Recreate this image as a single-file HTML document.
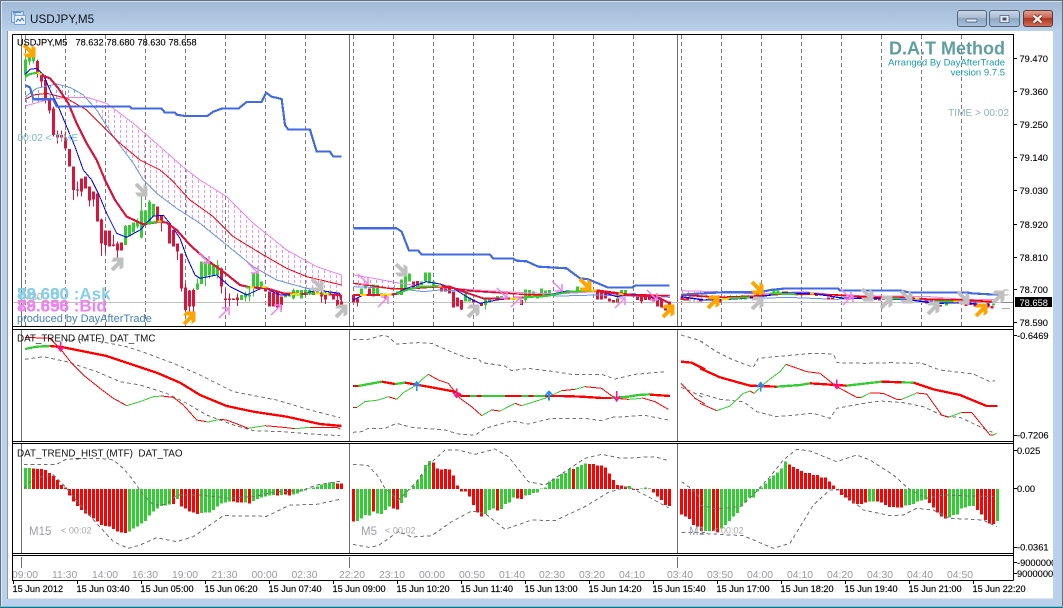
<!DOCTYPE html>
<html><head><meta charset="utf-8"><title>USDJPY,M5</title>
<style>
html,body{margin:0;padding:0;background:#b9d1ea;width:1063px;height:608px;overflow:hidden}
svg{display:block;font-family:"Liberation Sans",Arial,sans-serif}
text{white-space:pre}
.ax{font-size:9.3px;fill:#000;stroke:#000;stroke-width:.12}
.t{font-size:10.4px;fill:#9a9aa2}
.d{font-size:9.2px;fill:#000;stroke:#000;stroke-width:.15}
.n{fill:none;shape-rendering:crispEdges}
.cr{shape-rendering:crispEdges;fill:none}
</style></head><body>
<svg width="1063" height="608" viewBox="0 0 1063 608" xmlns="http://www.w3.org/2000/svg">
<defs>
<linearGradient id="tb" x1="0" y1="0" x2="0" y2="1"><stop offset="0" stop-color="#a0b8d4"/><stop offset="1" stop-color="#b9d1ea"/></linearGradient>
<linearGradient id="bt" x1="0" y1="0" x2="0" y2="1"><stop offset="0" stop-color="#c9d8ea"/><stop offset=".45" stop-color="#aabdd4"/><stop offset=".5" stop-color="#8da6c3"/><stop offset="1" stop-color="#a9c4de"/></linearGradient>
<linearGradient id="bc" x1="0" y1="0" x2="0" y2="1"><stop offset="0" stop-color="#e2a794"/><stop offset=".45" stop-color="#cc6350"/><stop offset=".5" stop-color="#ad3521"/><stop offset="1" stop-color="#d2715c"/></linearGradient>
<pattern id="hv" patternUnits="userSpaceOnUse" width="18" height="15"><rect x="0" y="0" width="3" height="9" fill="#ee82ee"/></pattern>
<pattern id="hb" patternUnits="userSpaceOnUse" width="18" height="15"><rect x="6" y="0" width="3" height="9" fill="#6495ed"/></pattern>
<g id="ne"><path d="M-5 6L3-2" fill="none" stroke="currentColor" stroke-width="4"/><path d="M-3-6H6V3L3 5V-3H-5Z" fill="currentColor" stroke="currentColor"/></g>
<g id="se"><path d="M-5-6L3 2" fill="none" stroke="currentColor" stroke-width="4"/><path d="M-3 6H6V-3L3-5V3H-5Z" fill="currentColor" stroke="currentColor"/></g>
<g id="nv"><path d="M-5 5L4-4M-2-5H5V2" fill="none" stroke="#ee82ee" stroke-width="1.5"/></g>
<g id="sv"><path d="M-5-5L4 4M-2 5H5V-2" fill="none" stroke="#ee82ee" stroke-width="1.5"/></g>
<clipPath id="axc"><rect x="1014" y="555" width="39" height="25"/></clipPath>
<clipPath id="tc"><rect x="13" y="556" width="1000" height="24"/></clipPath>
</defs>

<!-- window frame -->
<rect width="1063" height="608" fill="#b9d1ea"/>
<rect width="1063" height="32" fill="url(#tb)"/>
<rect x="0" y="0" width="1063" height="1" fill="#5f6f80"/>
<rect x="0" y="1" width="1063" height="1" fill="#d4e0ec"/>
<rect x="0" y="0" width="1" height="608" fill="#5f7285"/>
<rect x="1062" y="0" width="1" height="608" fill="#5f7285"/>
<rect x="1" y="2" width="1" height="604" fill="#dce8f4"/>
<rect x="0" y="607" width="1063" height="1" fill="#1b6f86"/>
<rect x="0" y="606" width="1063" height="1" fill="#6cc2d8"/>
<rect x="8" y="31" width="1045" height="568" fill="#fff"/>
<rect x="7" y="31" width="1" height="568" fill="#8e9aa6"/>
<rect x="8" y="598" width="1045" height="1" fill="#e4e4e4"/>

<!-- title -->
<g>
<rect x="11.5" y="11.5" width="12" height="11" rx="1" fill="#cfe1f5" stroke="#6c98cc"/>
<rect x="14.5" y="15.5" width="11" height="9" fill="#eaf2fb" stroke="#7ea6d6"/>
<path d="M16 22l2-3 2 2 2-3 2 3" fill="none" stroke="#3d6fb0"/>
<path d="M13 14h3M13 12.500h8" stroke="#5b8cc4" fill="none"/>
</g>
<text x="30" y="23" font-size="11.7" fill="#10151c">USDJPY,M5</text>

<!-- buttons -->
<g>
<rect x="957.500" y="10.500" width="29" height="16" rx="2.500" fill="url(#bt)" stroke="#56657a"/>
<rect x="966" y="19" width="11" height="3" rx="1" fill="#e8eef5" stroke="#46566a" stroke-width=".7"/>
<rect x="989.500" y="10.500" width="30" height="16" rx="2.500" fill="url(#bt)" stroke="#56657a"/>
<rect x="1000" y="15.500" width="9" height="7" fill="#e8eef5" stroke="#46566a" stroke-width=".7"/>
<rect x="1002.500" y="17.500" width="4" height="3" fill="#46566a"/>
<rect x="1023.500" y="10.500" width="29" height="16" rx="2.500" fill="url(#bc)" stroke="#5c3a38"/>
<path d="M1033.500 15.500l8 7M1041.500 15.500l-8 7" stroke="#6e2a20" stroke-width="4" fill="none"/>
<path d="M1033.500 15.500l8 7M1041.500 15.500l-8 7" stroke="#f6f0ee" stroke-width="2.400" fill="none"/>
</g>

<!-- dashed verticals -->
<path d="M25.500 35V326M65.500 35V326M105.500 35V326M145.500 35V326M185.500 35V326M225.500 35V326M265.500 35V326M305.500 35V326M353.500 35V326M393.500 35V326M433.500 35V326M473.500 35V326M513.500 35V326M553.500 35V326M593.500 35V326M633.500 35V326M681.500 35V326M721.500 35V326M761.500 35V326M801.500 35V326M841.500 35V326M881.500 35V326M921.500 35V326M961.500 35V326" class="cr" stroke="#7a7a7a" stroke-dasharray="4 3"/>
<!-- solid verticals -->
<path d="M21.500 35V326M349.500 35V326M677.500 35V326M21.500 329V441M349.500 329V441M677.500 329V441M21.500 444V553M349.500 444V553M677.500 444V553M21.500 557V568M349.500 557V568M677.500 557V568" class="cr" stroke="#6e6e6e"/>
<path d="M13 302.500H1013" class="cr" stroke="#c0c0c0"/>

<!-- MAIN section 1 -->
<g transform="scale(.33333)">
<path d="M270 295L320 310L400 370L480 440L560 510L600 540L680 590L760 670L860 750L950 800L1025 825L1025 882L920 865L830 840L760 800L680 735L600 670L530 625L470 580L430 540L400 490L340 410L290 330Z" fill="url(#hv)" opacity=".85"/>
<path d="M76 318L140 300L200 292L250 285L210 262L170 252L110 265L76 290Z" fill="url(#hb)" opacity=".85"/>
<!-- green candles -->
<path d="M76.500 178V225M88.500 172V185M100.500 172V183M376.500 678V735M388.500 675V710M400.500 668V698M412.500 665V680M424.500 632V712M436.500 632V670M448.500 605V670M460.500 612V650M592.500 850V868M604.500 785V852M616.500 785V830M628.500 790V825M640.500 792V828M652.500 795V825M724.500 885V900M736.500 880V892M748.500 885V890M760.500 820V865M772.500 820V860M784.500 845V862M856.500 885V892M868.500 880V890M880.500 870V895M892.500 870V880M904.500 870V895M916.500 870V885M928.500 870V880M952.500 875V882M988.500 875V885" class="cr" stroke="#32cd32" stroke-width="9"/>
<path d="M76.500 170V240M88.500 168V195M100.500 168V190M376.500 675V735M424.500 590V715M448.500 600V670M412.500 655V685M592.500 835V870M616.500 785V860M628.500 788V835M652.500 780V835M736.500 875V905M748.500 860V905M760.500 820V890M880.500 865V898M928.500 865V885" class="cr" stroke="#32cd32" stroke-width="3"/>
<!-- red candles -->
<path d="M112.500 183V220M124.500 225V245M136.500 240V298M148.500 300V332M160.500 325V405M172.500 405V412M184.500 405V412M196.500 412V445M208.500 447V500M220.500 500V570M232.500 568V572M244.500 535V575M256.500 530V565M268.500 560V602M280.500 575V598M292.500 580V665M304.500 658V730M316.500 692V735M328.500 692V740M340.500 733V738M352.500 730V752M364.500 728V752M472.500 620V665M484.500 648V665M496.500 665V670M508.500 672V730M520.500 690V740M532.500 730V755M544.500 760V865M556.500 863V930M568.500 872V920M580.500 870V920M664.500 805V860M676.500 895V900M688.500 895V900M700.500 895V900M712.500 892V900M796.500 865V875M808.500 875V920M820.500 878V920M832.500 878V922M844.500 890V915M940.500 875V885M964.500 885V890M976.500 885V898M1000.500 885V898M1012.500 900V918M1024.500 905V918" class="cr" stroke="#dc143c" stroke-width="9"/>
<path d="M112.500 178V232M124.500 220V262M136.500 225V310M148.500 295V340M160.500 320V410M172.500 392V430M184.500 392V425M196.500 395V450M220.500 500V600M232.500 545V590M244.500 535V590M268.500 560V620M280.500 575V620M304.500 655V768M316.500 692V760M352.500 725V780M340.500 705V740M484.500 648V695M532.500 730V780M544.500 760V875M556.500 850V935M568.500 870V935M580.500 865V935M664.500 802V880M676.500 865V925M688.500 880V920M712.500 880V918M844.500 890V930M964.500 875V908M976.500 875V912M1012.500 885V920M1024.500 885V920" class="cr" stroke="#dc143c" stroke-width="3"/>
<!-- lines -->
<path d="M76 290L110 265L170 252L210 262L250 285L290 330L340 410L400 490L430 540L470 580L530 625L600 670L680 735L760 800L830 840L920 865L1025 882" class="n" stroke="#6495ed" stroke-width="3"/>
<path d="M76 318L140 300L200 292L260 292L320 310L400 370L480 440L560 510L600 540L680 590L760 670L860 750L950 800L1025 825V860" class="n" stroke="#ee82ee" stroke-width="3"/>
<path d="M76 298L100 285L140 280L200 295L260 330L300 370L360 430L420 480L480 510L515 540L570 600L640 650L700 710L790 765L860 805L920 830L1025 855" class="n" stroke="#ff0000" stroke-width="3"/>
<path d="M76 222L90 208L110 205L130 225L150 270L175 320L200 380L225 440L250 510L275 540L295 580L320 640L350 700L380 712L420 690L460 648L490 646L510 670L540 715L560 770L585 825L600 835L650 825L690 860L740 885L790 862L840 885L900 885L950 870L1020 880" class="n" stroke="#0000ff" stroke-width="3"/>
<path d="M125 226L150 235L175 265L205 310L230 370L260 430L290 480L315 540L345 600L380 650L430 673L480 665L500 668L530 690L570 735L620 780L670 815L720 855L750 862L800 865L850 880L900 882L950 880L1020 885L1024 900" class="n" stroke="#dc143c" stroke-width="6.500"/>
<path d="M76 230L90 222L112 218" class="n" stroke="#32cd32" stroke-width="6.500"/>
<path d="M112 218L126 224" class="n" stroke="#ffd700" stroke-width="6.500"/>
<path d="M440 671L470 665M740 862L755 862M905 883L870 883M920 880L945 880M965 880L990 882" class="n" stroke="#32cd32" stroke-width="6"/>
<path d="M472 665L485 665M750 862L762 863M785 860L800 862M870 883L900 882M945 880L960 881M970 882L985 882" class="n" stroke="#ffd700" stroke-width="6"/>
<path d="M76 256L90 262L100 298L160 298L170 320L390 320L395 326L485 326L495 338L525 338L530 344L555 348L622 348L640 335L665 326L715 326L740 306L785 306L798 278L815 290L845 297L855 375L865 389L930 389L950 455L990 455L1000 470L1025 470" class="n" stroke="#4169e1" stroke-width="6.500"/>
</g>

<!-- MAIN section 2 -->
<g transform="translate(340,220) scale(.33333)">
<path d="M40 165L100 175L170 188L250 200L250 215L170 205L40 200Z" fill="url(#hv)"/>
<path d="M40.500 225V248M52.500 235V248M88.500 205V228M124.500 220V228M136.500 225V235M220.500 185V205M232.500 183V205M304.500 198V215M316.500 198V215M328.500 198V220M340.500 215V262M352.500 232V260M364.500 240V268M400.500 238V248M424.500 250V258M544.500 240V255M772.500 215V238M784.500 215V238M796.500 215V235M808.500 235V245M820.500 240V248M832.500 235V248M880.500 222V230M892.500 225V240M904.500 225V245M916.500 225V240M928.500 228V240M940.500 230V245M952.500 240V260M964.500 240V262M976.500 262V272M988.500 245V262" class="cr" stroke="#dc143c" stroke-width="9"/>
<path d="M52.500 235V260M340.500 215V262M364.500 240V270M904.500 225V250" class="cr" stroke="#dc143c" stroke-width="3"/>
<path d="M64.500 205V225M76.500 195V205M100.500 193V230M112.500 195V225M172.500 215V225M184.500 178V225M196.500 160V205M208.500 160V185M244.500 185V195M256.500 158V185M268.500 158V190M280.500 185V200M376.500 220V245M388.500 232V245M436.500 238V255M448.500 235V248M472.500 228V235M484.500 228V235M520.500 232V240M556.500 208V240M568.500 210V228M580.500 215V225M592.500 222V235M604.500 205V232M616.500 212V228M628.500 210V225M712.500 200V212M844.500 210V220M856.500 210V220" class="cr" stroke="#32cd32" stroke-width="9"/>
<path d="M436.500 238V268M556.500 208V248M832.500 230V250" class="cr" stroke="#32cd32" stroke-width="3"/>
<path d="M40 200L170 205L250 215L300 210L400 215L520 222L660 228L770 225L990 232" class="n" stroke="#6495ed" stroke-width="3"/>
<path d="M40 165L100 175L170 188L250 200L340 205L440 212L550 218L650 222L770 215L850 223L990 225" class="n" stroke="#ee82ee" stroke-width="3"/>
<path d="M40 190L100 198L160 207L230 205L300 200L340 205L400 213L480 218L560 224L620 225L700 215L770 210L860 222L990 228" class="n" stroke="#ff0000" stroke-width="4"/>
<path d="M40 240L70 225L160 225L200 205L260 185L300 192L340 205L380 230L420 250L470 240L520 235L600 230L680 213L770 212L830 230L880 222L950 235L990 248" class="n" stroke="#0000ff" stroke-width="3"/>
<path d="M40 225L120 225L170 222L200 210M300 198L330 200L370 215L430 235L520 235L550 232M760 212L800 218L860 225L950 230L990 250" class="n" stroke="#dc143c" stroke-width="6"/>
<path d="M170 222L200 210L240 200L300 198M550 232L620 228L690 215L760 212" class="n" stroke="#32cd32" stroke-width="6"/>
<path d="M60 225L80 225M120 225L155 223M295 198L305 198M510 235L535 235M750 212L770 212M835 222L850 223" class="n" stroke="#ffd700" stroke-width="6"/>
<path d="M40 25L170 25L185 35L207 92L235 92L245 104L450 104L460 116L520 116L530 122L560 124L595 140L680 145L720 175L745 178L805 203L875 203L885 197L988 197" class="n" stroke="#4169e1" stroke-width="6.500"/>
</g>

<!-- MAIN section 3 -->
<g transform="translate(670,260) scale(.33333)">
<path d="M34 92L140 95L260 102L260 115L140 112L34 104Z" fill="url(#hv)"/>
<path d="M34 92L140 95L260 102L400 95L500 105L650 108L780 110L880 118L980 118" class="n" stroke="#ee82ee" stroke-width="3"/>
<path d="M34 106L150 110L270 115L350 112L500 118L650 112L780 122L900 125L980 128" class="n" stroke="#6495ed" stroke-width="3"/>
<path d="M36 110V120M44 115V122M52 113V122M92 115V124M150 120V128M180 112V118M262 100V108M340 95V100M350 95V100M440 100V108M452 100V106M464 100V108M476 112V118M488 112V118M616 110V120M628 110V122M640 112V120M770 122V130M784 122V130M812 135V140M888 128V138M900 125V135M915 128V140M930 130V138M942 135V142M954 128V142M966 138V146" class="cr" stroke="#dc143c" stroke-width="9"/>
<path d="M200 110V118M212 108V118M226 110V118M238 108V116M312 92V100M324 92V98M380 100V106M395 100V106M830 130V136M970 130V136" class="cr" stroke="#32cd32" stroke-width="9"/>
<path d="M60 102V128M72 102V128M84 102V128M96 102V128" class="cr" stroke="#999" stroke-width="3"/>
<path d="M34 105L150 112L260 108L340 102L420 102L500 105L600 112L700 112L780 118L880 120L970 125" class="n" stroke="#ff0000" stroke-width="5"/>
<path d="M34 110L100 120L170 118L260 112L330 100L430 100L520 115L620 115L720 120L800 130L860 128L960 135" class="n" stroke="#0000ff" stroke-width="4"/>
<path d="M170 115L240 112M300 100L380 103M800 125L850 125M660 115L690 115" class="n" stroke="#32cd32" stroke-width="6"/>
<path d="M155 118L178 116M420 100L432 100M735 115L748 115M850 125L862 125" class="n" stroke="#ffd700" stroke-width="6"/>
<path d="M34 104L155 97L270 97L300 90L340 86L505 86L510 92L695 92L720 98L895 98L905 100L975 104L1000 100" class="n" stroke="#4169e1" stroke-width="6.500"/>
<path d="M1000 90H1015M1000 105H1015M995 145H1020" class="n" stroke="#aaa" stroke-width="3"/>
<path d="M995 128H1030" class="n" stroke="#888" stroke-width="3"/>
</g>

<!-- arrows -->
<g color="#ffa500">
<use href="#se" x="29" y="51"/><use href="#ne" x="189" y="318"/><use href="#se" x="585" y="285"/><use href="#ne" x="668" y="311"/><use href="#se" x="757" y="288"/><use href="#ne" x="713" y="302"/><use href="#ne" x="981" y="310"/>
</g>
<g color="#c0c0c0">
<use href="#ne" x="117" y="264"/><use href="#se" x="141" y="190"/><use href="#se" x="317" y="285"/><use href="#ne" x="341" y="311"/><use href="#se" x="401" y="270"/><use href="#ne" x="473" y="311"/><use href="#ne" x="757" y="303"/><use href="#se" x="867" y="295"/><use href="#ne" x="886" y="302"/><use href="#se" x="906" y="297"/><use href="#ne" x="933" y="308"/><use href="#se" x="963" y="298"/><use href="#ne" x="998" y="297"/>
</g>
<use href="#sv" x="204" y="258"/><use href="#sv" x="253" y="268"/><use href="#nv" x="224" y="313"/><use href="#nv" x="276" y="310"/><use href="#sv" x="363" y="279"/><use href="#nv" x="383" y="302"/><use href="#sv" x="502" y="293"/><use href="#nv" x="516" y="302"/><use href="#sv" x="557" y="286"/><use href="#nv" x="620" y="303"/><use href="#sv" x="652" y="295"/><use href="#sv" x="846" y="294"/><use href="#nv" x="848" y="300"/>

<!-- panel 2 -->
<g transform="translate(0,330) scale(.33333)">
<path d="M195 30L260 28L330 40L380 50L440 70L520 100L600 135L700 185L830 210L930 240L1020 263" class="n" stroke="#707070" stroke-width="3" stroke-dasharray="11 9"/>
<path d="M75 88L130 80L200 95L290 125L360 155L420 165L500 190L560 220L620 255L700 285L760 302L850 305L930 312L1020 317" class="n" stroke="#707070" stroke-width="3" stroke-dasharray="11 9"/>
<path d="M75 22L150 25L180 55L215 100L250 135L300 175L340 205L380 227M485 198L520 202L550 225L590 270L620 275M660 268L680 270L745 295M795 287L850 292L885 296M930 292L1010 292L1022 298" class="n" stroke="#ff0000" stroke-width="3"/>
<path d="M380 227L420 215L460 200L485 198M620 277L660 268M745 295L795 287M885 296L930 292" class="n" stroke="#32cd32" stroke-width="3"/>
<path d="M150 48L190 52L240 62L320 78L400 105L470 128L540 158L600 195L680 228L760 245L860 260L960 282L1025 288" class="n" stroke="#ff0000" stroke-width="7"/>
<path d="M75 57L110 50L150 48" class="n" stroke="#32cd32" stroke-width="7"/>
<path d="M182 36V62M172 50L182 62L192 50" class="n" stroke="#ff1493" stroke-width="5"/>
</g>
<g transform="translate(345,330) scale(.33333)">
<path d="M24 28L70 28L115 15L130 20L155 42L220 38L260 40L330 70L370 85L400 85L410 98L480 108L500 122L550 115L650 128L680 133L770 133L810 147L870 133L965 125" class="n" stroke="#707070" stroke-width="3" stroke-dasharray="11 9"/>
<path d="M24 307L50 305L70 295L120 295L155 280L200 292L300 300L340 312L390 316L420 295L500 273L550 282L620 265L720 265L770 272L800 262L900 256L970 270" class="n" stroke="#707070" stroke-width="3" stroke-dasharray="11 9"/>
<path d="M1008 15L1060 30L1080 40M1008 172L1040 185L1080 205" class="n" stroke="#707070" stroke-width="3" stroke-dasharray="11 9"/>
<path d="M24 232L36 232M130 200L155 208M250 133L280 150L310 160L345 205L380 230L410 257M440 240L465 243M510 220L530 227M650 182L690 178M720 170L770 175L810 205L850 208M890 203L930 215L970 238M1008 160L1050 205L1080 222" class="n" stroke="#ff0000" stroke-width="3"/>
<path d="M36 232L60 215L100 210L130 200M155 208L175 188L215 165L235 145L250 133M410 257L440 240M465 243L510 220M530 227L600 205L650 182M690 178L720 170M850 208L890 205" class="n" stroke="#32cd32" stroke-width="3"/>
<path d="M24 168H40M110 155L150 162M180 158L260 172L330 185L350 198H650L710 200L770 204L800 204M915 194L975 198M1008 95L1040 98L1080 118" class="n" stroke="#ff0000" stroke-width="7"/>
<path d="M40 168L110 155M150 162L180 158M375 198H395M410 198H480M530 198H550M565 198H600M800 204L850 200L880 195L915 193" class="n" stroke="#32cd32" stroke-width="7"/>
<path d="M215 183V158M205 168L215 156L225 168M612 212V186M602 196L612 184L622 196" class="n" stroke="#1e90ff" stroke-width="5"/>
<path d="M335 175V202M325 188L335 202L345 188M815 183V212M805 198L815 212L825 198" class="n" stroke="#ff1493" stroke-width="5"/>
</g>
<g transform="translate(700,330) scale(.33333)">
<path d="M0 33L50 65L100 90L160 112L175 85L280 75L340 70L400 72L412 98L500 100L570 98L640 100L660 98L720 120L820 132L870 155L885 152" class="n" stroke="#707070" stroke-width="3" stroke-dasharray="11 9"/>
<path d="M0 190L60 208L130 215L170 245L230 260L340 250L390 265L410 235L480 222L540 213L610 218L670 230L730 258L780 262L850 295L885 310" class="n" stroke="#707070" stroke-width="3" stroke-dasharray="11 9"/>
<path d="M0 220L50 242M150 183L162 190M258 103L320 125L360 130L410 170L470 202L485 202M510 189L550 190L590 208L605 208M650 189L680 192L725 255L745 262M785 247L815 247L870 315L880 315" class="n" stroke="#ff0000" stroke-width="3"/>
<path d="M50 242L90 228L130 190L150 183M162 190L200 155L240 125L258 103M485 202L510 189M605 208L650 189M745 262L785 247M880 315L890 310" class="n" stroke="#32cd32" stroke-width="3"/>
<path d="M0 115L60 142L150 167L230 170M330 160L440 167M545 155L605 157M640 158L700 178L780 195L860 228L892 228" class="n" stroke="#ff0000" stroke-width="7"/>
<path d="M230 170L300 165L330 160M440 167L500 160L545 155M605 157L640 158" class="n" stroke="#32cd32" stroke-width="7"/>
<path d="M182 185V160M172 172L182 158L192 172" class="n" stroke="#1e90ff" stroke-width="5"/>
<path d="M410 148V175M400 162L410 175L420 162" class="n" stroke="#ff1493" stroke-width="5"/>
</g>

<!-- panel 3 -->
<g transform="translate(0,445) scale(.33333)">
<path d="M100.500 132V70M112.500 132V72M124.500 132V72M136.500 132V75M148.500 132V84M160.500 132V93M172.500 132V105M184.500 132V120M196.500 132V127M208.500 132V152M220.500 132V170M232.500 132V183M244.500 132V195M256.500 132V205M268.500 132V212M280.500 132V220M292.500 132V230M304.500 132V240M316.500 132V243M328.500 132V245M340.500 132V252M352.500 132V260M364.500 132V263M376.500 132V264M520.500 132V177M544.500 132V185M556.500 132V190M568.500 132V200M580.500 132V203M592.500 132V207M700.500 132V170M712.500 132V172M724.500 132V172M748.500 132V175M832.500 132V152M856.500 132V148M868.500 132V152M1012.500 132V116M1024.500 132V116" class="cr" stroke="#ff0000" stroke-width="9"/>
<path d="M76.500 132V69M88.500 132V69M388.500 132V260M400.500 132V250M412.500 132V245M424.500 132V236M436.500 132V228M448.500 132V212M460.500 132V200M472.500 132V190M484.500 132V183M496.500 132V182M508.500 132V178M532.500 132V162M604.500 132V204M616.500 132V203M628.500 132V203M640.500 132V195M652.500 132V185M664.500 132V175M676.500 132V172M688.500 132V170M736.500 132V172M760.500 132V168M772.500 132V162M784.500 132V158M796.500 132V155M808.500 132V152M820.500 132V150M844.500 132V150M880.500 132V148M892.500 132V145M904.500 132V140M916.500 132V137M928.500 132V130M940.500 132V127M952.500 132V125M964.500 132V118M976.500 132V116M988.500 132V113M1000.500 132V111" class="cr" stroke="#32cd32" stroke-width="9"/>
<path d="M72 58L170 58L200 42L300 40L340 45L370 70L395 100L430 150L460 180L500 178L530 150L600 150L690 160L760 155L830 140L900 138L950 120L1000 112L1025 108" class="n" stroke="#707070" stroke-width="3" stroke-dasharray="11 9"/>
<path d="M72 130L100 100L160 90L200 130L240 180L290 235L340 290L385 310L420 300L470 278L530 290L580 275L630 240L670 212L800 214L870 180L950 178L1025 162" class="n" stroke="#707070" stroke-width="3" stroke-dasharray="11 9"/>
</g>
<g transform="translate(345,445) scale(.33333)">
<path d="M25.500 132V230M85.500 132V200M145.500 132V190M157.500 132V194M265.500 132V53M277.500 132V70M289.500 132V74M301.500 132V72M313.500 132V73M325.500 132V92M337.500 132V122M349.500 132V140M361.500 132V140M373.500 132V155M385.500 132V180M397.500 132V202M409.500 132V215M457.500 132V197M517.500 132V160M529.500 132V162M685.500 132V72M733.500 132V57M745.500 132V57M757.500 132V62M769.500 132V62M781.500 132V68M793.500 132V86M805.500 132V105M817.500 132V120M829.500 132V122M841.500 132V125M865.500 132V135M877.500 132V135M913.500 132V130M925.500 132V143M937.500 132V155M949.500 132V165M961.500 132V180M973.500 132V183M1009.500 132V208M1021.500 132V215M1033.500 132V222M1045.500 132V240M1057.500 132V245M1069.500 132V258" class="cr" stroke="#ff0000" stroke-width="9"/>
<path d="M37.500 132V228M49.500 132V220M61.500 132V210M73.500 132V212M97.500 132V205M109.500 132V207M121.500 132V195M133.500 132V185M169.500 132V174M181.500 132V158M193.500 132V134M205.500 132V123M217.500 132V106M229.500 132V90M241.500 132V60M253.500 132V48M421.500 132V207M433.500 132V195M445.500 132V190M469.500 132V192M481.500 132V177M493.500 132V172M505.500 132V158M541.500 132V152M553.500 132V150M565.500 132V144M577.500 132V143M589.500 132V130M601.500 132V127M613.500 132V110M625.500 132V100M637.500 132V100M649.500 132V87M661.500 132V84M673.500 132V72M697.500 132V66M709.500 132V60M721.500 132V55M853.500 132V123M889.500 132V130M901.500 132V127" class="cr" stroke="#32cd32" stroke-width="9"/>
<path d="M24 58L70 62L100 95L120 130L160 165L215 110L250 60L300 15L340 15L390 28L450 12L490 35L550 110L600 120L660 80L720 40L770 28L830 40L930 35L970 47M1010 110L1050 140L1080 180" class="n" stroke="#707070" stroke-width="3" stroke-dasharray="11 9"/>
<path d="M24 298L70 307L100 302L160 260L200 276L260 272L320 230L380 198L420 205L480 253L560 225L630 227L720 185L790 142L850 125L900 150L970 188M1010 262L1080 262" class="n" stroke="#707070" stroke-width="3" stroke-dasharray="11 9"/>
</g>
<g transform="translate(700,445) scale(.33333)">
<path d="M4.500 132V258M40.500 132V258M52.500 132V262M268.500 132V58M280.500 132V66M292.500 132V72M304.500 132V78M316.500 132V84M328.500 132V84M340.500 132V90M352.500 132V90M364.500 132V98M376.500 132V98M388.500 132V110M400.500 132V122M412.500 132V137M424.500 132V150M436.500 132V158M448.500 132V166M460.500 132V175M472.500 132V177M484.500 132V177M496.500 132V172M532.500 132V170M544.500 132V172M556.500 132V180M568.500 132V186M580.500 132V186M592.500 132V188M604.500 132V188M688.500 132V174M700.500 132V187M712.500 132V203M724.500 132V215M736.500 132V220M832.500 132V195M844.500 132V208M856.500 132V225M868.500 132V235M880.500 132V237" class="cr" stroke="#ff0000" stroke-width="9"/>
<path d="M16.500 132V258M28.500 132V258M64.500 132V250M76.500 132V240M88.500 132V228M100.500 132V215M112.500 132V204M124.500 132V185M136.500 132V172M148.500 132V158M160.500 132V158M172.500 132V140M184.500 132V128M196.500 132V115M208.500 132V100M220.500 132V92M232.500 132V82M244.500 132V70M256.500 132V50M508.500 132V170M520.500 132V170M616.500 132V182M628.500 132V180M640.500 132V177M652.500 132V170M664.500 132V167M676.500 132V163M748.500 132V218M760.500 132V210M772.500 132V208M784.500 132V190M796.500 132V188M808.500 132V183M820.500 132V183M892.500 132V228" class="cr" stroke="#32cd32" stroke-width="9"/>
<path d="M0 180L50 192L120 185L160 150L210 95L250 45L290 13L330 18L410 50L470 30L510 45L580 90L630 135L680 160L730 150L880 155" class="n" stroke="#707070" stroke-width="3" stroke-dasharray="11 9"/>
<path d="M0 265L130 272L220 310L270 295L340 180L390 135L420 135L490 195L570 212L610 210L650 190L700 195L750 220L850 225L890 245" class="n" stroke="#707070" stroke-width="3" stroke-dasharray="11 9"/>
</g>

<!-- panel borders -->
<path d="M12.500 34.500H1013.500V580.500M12.500 34.500V580.500H1013.500M12 326.500H1014M12 329.500H1014M12 441.500H1014M12 443.500H1014M12 553.500H1014M12 555.500H1014" class="cr" stroke="#000"/>

<!-- axis ticks -->
<path d="M1014 58.500h3M1014 91.500h3M1014 124.500h3M1014 157.500h3M1014 190.500h3M1014 224.500h3M1014 257.500h3M1014 289.500h3M1014 322.500h3M1014 335.500h3M1014 435.500h3M1014 450.500h3M1014 488.500h3M1014 547.500h3M1014 562.500h3M1014 573.500h3" class="cr" stroke="#000"/>
<path d="M13.500 580v4M77.500 580v4M141.500 580v4M205.500 580v4M269.500 580v4M333.500 580v4M397.500 580v4M461.500 580v4M525.500 580v4M589.500 580v4M653.500 580v4M717.500 580v4M781.500 580v4M845.500 580v4M909.500 580v4M973.500 580v4" class="cr" stroke="#000"/>

<!-- axis labels -->
<text class="ax" x="1019.500" y="62">79.470</text>
<text class="ax" x="1019.500" y="95">79.360</text>
<text class="ax" x="1019.500" y="128">79.250</text>
<text class="ax" x="1019.500" y="161">79.140</text>
<text class="ax" x="1019.500" y="194">79.030</text>
<text class="ax" x="1019.500" y="228">78.920</text>
<text class="ax" x="1019.500" y="261">78.810</text>
<text class="ax" x="1019.500" y="293">78.700</text>
<text class="ax" x="1019.500" y="326">78.590</text>
<rect x="1015" y="297" width="37" height="10" fill="#000"/>
<text x="1019.500" y="306" font-size="9.300" fill="#fff">78.658</text>
<text class="ax" x="1017" y="339">-0.6469</text>
<text class="ax" x="1017" y="438.500">-0.7206</text>
<text class="ax" x="1017" y="454">0.025</text>
<text class="ax" x="1017" y="492">0.00</text>
<text class="ax" x="1017" y="550.500">-0.0361</text>
<g clip-path="url(#axc)"><text class="ax" x="1017" y="566">-9000000</text><text class="ax" x="1017" y="577">9000000</text></g>

<!-- time labels -->
<g clip-path="url(#tc)">
<text class="t" x="12" y="578">09:00</text><text class="t" x="52" y="578">11:30</text><text class="t" x="92" y="578">14:00</text><text class="t" x="132" y="578">16:30</text><text class="t" x="172" y="578">19:00</text><text class="t" x="211.500" y="578">21:30</text><text class="t" x="251.500" y="578">00:00</text><text class="t" x="291.500" y="578">02:30</text><text class="t" x="339" y="578">22:20</text><text class="t" x="379" y="578">23:10</text><text class="t" x="419" y="578">00:00</text><text class="t" x="459" y="578">00:50</text><text class="t" x="499" y="578">01:40</text><text class="t" x="539" y="578">02:30</text><text class="t" x="579" y="578">03:20</text><text class="t" x="619" y="578">04:10</text><text class="t" x="667" y="578">03:40</text><text class="t" x="707" y="578">03:50</text><text class="t" x="747" y="578">04:00</text><text class="t" x="787" y="578">04:10</text><text class="t" x="827" y="578">04:20</text><text class="t" x="867" y="578">04:30</text><text class="t" x="907" y="578">04:40</text><text class="t" x="947" y="578">04:50</text>
</g>
<text class="d" x="12.500" y="592">15 Jun 2012</text><text class="d" x="76.500" y="592">15 Jun 03:40</text><text class="d" x="140.500" y="592">15 Jun 05:00</text><text class="d" x="204.500" y="592">15 Jun 06:20</text><text class="d" x="268.500" y="592">15 Jun 07:40</text><text class="d" x="332.500" y="592">15 Jun 09:00</text><text class="d" x="396.500" y="592">15 Jun 10:20</text><text class="d" x="460.500" y="592">15 Jun 11:40</text><text class="d" x="524.500" y="592">15 Jun 13:00</text><text class="d" x="588.500" y="592">15 Jun 14:20</text><text class="d" x="652.500" y="592">15 Jun 15:40</text><text class="d" x="716.500" y="592">15 Jun 17:00</text><text class="d" x="780.500" y="592">15 Jun 18:20</text><text class="d" x="844.500" y="592">15 Jun 19:40</text><text class="d" x="908.500" y="592">15 Jun 21:00</text><text class="d" x="972.500" y="592">15 Jun 22:20</text>

<!-- chart text -->
<text x="17" y="45.500" font-size="9.200" fill="#000" stroke="#000" stroke-width=".12">USDJPY,M5</text>
<text x="75.500" y="45.500" font-size="9.200" fill="#000" stroke="#000" stroke-width=".12">78.632</text><text x="106.500" y="45.500" font-size="9.200" fill="#000" stroke="#000" stroke-width=".12">78.680</text><text x="137.500" y="45.500" font-size="9.200" fill="#000" stroke="#000" stroke-width=".12">78.630</text><text x="168.500" y="45.500" font-size="9.200" fill="#000" stroke="#000" stroke-width=".12">78.658</text>
<text x="1005" y="54.500" font-size="18" font-weight="bold" fill="#5f9ea0" text-anchor="end">D.A.T Method</text>
<text x="1005" y="65.500" font-size="9.500" fill="#1a9aa6" text-anchor="end">Arranged By DayAfterTrade</text>
<text x="1005" y="75.500" font-size="9.500" fill="#1a9aa6" text-anchor="end">version 9.7.5</text>
<text x="1009" y="116" font-size="10.100" fill="#8fb3bc" text-anchor="end">TIME &gt; 00:02</text>
<text x="17.500" y="141" font-size="10.100" fill="#7fb9c6">00:02 &lt; TIME</text>
<text x="23" y="300" font-size="10" fill="#aaa">M30</text>
<text x="17" y="299.500" font-size="17" font-weight="bold" fill="#87ceeb">78.680 :Ask</text>
<text x="17" y="299.500" font-size="17" font-weight="bold" fill="#87ceeb">89.600</text>
<text x="17" y="311.500" font-size="17" font-weight="bold" fill="#ee82ee">78.658 :Bid</text>
<text x="17" y="311.500" font-size="17" font-weight="bold" fill="#ee82ee">89.896</text>
<text x="17" y="322" font-size="11" fill="#4682b4">produced by DayAfterTrade</text>
<text x="17" y="341.500" font-size="9.800" fill="#111">DAT_TREND (MTF)  DAT_TMC</text>
<text x="17" y="456.500" font-size="9.900" fill="#111">DAT_TREND_HIST (MTF)  DAT_TAO</text>
<text x="29" y="535" font-size="11.500" fill="#9c9cac">M15</text><text x="61" y="533.500" font-size="9.100" fill="#a8a8a8">&lt; 00:02</text>
<text x="361" y="535" font-size="11.500" fill="#9c9cac">M5</text><text x="385" y="533.500" font-size="9.100" fill="#a8a8a8">&lt; 00:02</text>
<text x="689" y="535" font-size="11.500" fill="#9c9cac">M1</text><text x="713" y="533.500" font-size="9.100" fill="#a8a8a8">&lt; 00:02</text>
</svg>
</body></html>
